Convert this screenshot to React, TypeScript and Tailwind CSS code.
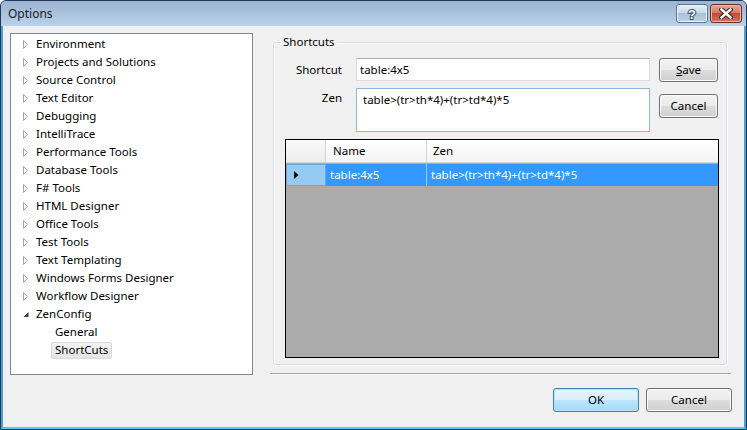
import React from "react"

const treeItems = [
	"Environment",
	"Projects and Solutions",
	"Source Control",
	"Text Editor",
	"Debugging",
	"IntelliTrace",
	"Performance Tools",
	"Database Tools",
	"F# Tools",
	"HTML Designer",
	"Office Tools",
	"Test Tools",
	"Text Templating",
	"Windows Forms Designer",
	"Workflow Designer",
]

function Collapsed() {
	return (
		<svg width="6" height="9" viewBox="0 0 6 9" className="shrink-0">
			<path d="M0.5 0.5 L4.5 4.5 L0.5 8.5 Z" fill="#ffffff" stroke="#a6a6a6" />
		</svg>
	)
}

function Expanded() {
	return (
		<svg width="6" height="9" viewBox="0 0 6 9" className="shrink-0">
			<path d="M5.5 2 L5.5 7 L0.5 7 Z" fill="#3b3b3b" />
		</svg>
	)
}

function WinButton({ children, focused, className }: { children: React.ReactNode; focused?: boolean; className?: string }) {
	return (
		<div
			className={
				(focused
					? "border-[#3c7fb1] bg-[linear-gradient(to_bottom,#e5f4fc_0%,#d8effb_50%,#bde6fd_50%,#a6d9f4_100%)] shadow-[inset_0_0_0_1px_#b9e4f7] "
					: "border-[#707070] bg-[linear-gradient(to_bottom,#f2f2f2_0%,#ebebeb_50%,#dddddd_50%,#cfcfcf_100%)] shadow-[inset_0_0_0_1px_#fafafa] ") +
				"border rounded-[3px] flex items-center justify-center text-black " +
				(className ?? "")
			}
		>
			{children}
		</div>
	)
}

export default function App() {
	return (
		<div className="w-[747px] h-[430px] flex flex-col rounded-t-[6px] border border-[#1f3a58] bg-[#b8cfe8] font-['Noto_Sans',sans-serif] text-[11.5px] text-black overflow-hidden">
			{/* title bar */}
			<div className="h-[25px] shrink-0 flex items-start justify-between bg-[linear-gradient(to_bottom,#9cb3d1,#bad1eb)] rounded-t-[5px]">
				<div className="pl-[7px] pt-[4px] text-[12px] text-[#1a1a1a]">Options</div>
				<div className="flex gap-[2px] pt-[3px] pr-[4px]">
					<div className="w-[32px] h-[19px] rounded-[3px] border border-[#5d7594] bg-[linear-gradient(to_bottom,#e8f0f8_0%,#c7d8ea_45%,#a9c1dc_50%,#bdd3ea_100%)] shadow-[inset_0_0_0_1px_#eef4fa] flex items-center justify-center">
						<svg width="14" height="14" viewBox="0 0 14 14">
							<text
								x="7"
								y="12"
								textAnchor="middle"
								fontSize="13"
								fontWeight="bold"
								fontFamily="Liberation Sans, sans-serif"
								fill="#ffffff"
								stroke="#3a4f68"
								strokeWidth="2"
								paintOrder="stroke"
							>
								?
							</text>
						</svg>
					</div>
					<div className="w-[32px] h-[19px] rounded-[3px] border border-[#6e2a24] bg-[linear-gradient(to_bottom,#e8a493_0%,#d77b68_45%,#c24a32_50%,#d2785f_100%)] shadow-[inset_0_0_0_1px_#eab7aa] flex items-center justify-center">
						<svg width="14" height="11" viewBox="0 0 14 11">
							<path d="M2.5 1.5 L11.5 9.5 M11.5 1.5 L2.5 9.5" stroke="#3b2420" strokeWidth="4.5" strokeLinecap="square" />
							<path d="M2.5 1.5 L11.5 9.5 M11.5 1.5 L2.5 9.5" stroke="#ffffff" strokeWidth="2.5" strokeLinecap="square" />
						</svg>
					</div>
				</div>
			</div>

			{/* frame + client */}
			<div className="flex-1 border-x-2 border-b-2 border-x-[#4d9dd1] border-b-[#58c6ec] bg-[#f0f0f0] flex flex-col">
				<div className="pt-[7px] pl-[7px] flex h-[349px]">
					{/* tree */}
					<div className="w-[243px] h-[342px] shrink-0 bg-white border border-[#828790] pt-[1px]">
						{treeItems.map((t) => (
							<div key={t} className="h-[18px] flex items-center pl-[12px] gap-[7px]">
								<Collapsed />
								<span>{t}</span>
							</div>
						))}
						<div className="h-[18px] flex items-center pl-[12px] gap-[7px]">
							<Expanded />
							<span>ZenConfig</span>
						</div>
						<div className="h-[18px] flex items-center pl-[44px]">General</div>
						<div className="h-[18px] flex items-center pl-[40px]">
							<span className="h-[17px] flex items-center px-[3px] border border-[#d9d9d9] rounded-[2px] bg-[linear-gradient(to_bottom,#f2f2f2,#e5e5e5)]">
								ShortCuts
							</span>
						</div>
					</div>

					{/* right page */}
					<div className="ml-[17px] flex-1 pt-[9px] flex flex-col">
						<div className="relative ml-[3px] w-[454px] h-[323px] border border-[#d5dfe5] rounded-[3px] shadow-[inset_1px_1px_0_#ffffff,1px_1px_0_#ffffff]">
							<div className="absolute -top-[9px] left-[7px] px-[2px] bg-[#f0f0f0] leading-[16px]">Shortcuts</div>
							<div className="pt-[15px] flex">
								<div className="w-[68px] flex flex-col items-end">
									<div className="h-[23px] flex items-center">Shortcut</div>
									<div className="mt-[7px] pt-[1px]">Zen</div>
								</div>
								<div className="ml-[14px] w-[294px] flex flex-col">
									<div className="h-[23px] bg-white border border-[#d9dde3] border-t-[#abadb3] flex items-center pl-[3px]">table:4x5</div>
									<div className="mt-[7px] h-[44px] bg-white border border-[#8fb6dc] pl-[6px] pt-[2px]">table&gt;(tr&gt;th*4)+(tr&gt;td*4)*5</div>
								</div>
								<div className="ml-[9px] flex flex-col">
									<WinButton className="w-[59px] h-[24px]">
										<span>
											<span className="underline">S</span>ave
										</span>
									</WinButton>
									<WinButton className="w-[59px] h-[24px] mt-[12px]">Cancel</WinButton>
								</div>
							</div>

							{/* grid */}
							<div className="ml-[11px] mt-[7px] w-[434px] h-[219px] border border-black bg-[#ababab] flex flex-col">
								<div className="h-[23px] flex bg-[linear-gradient(to_bottom,#ffffff,#f4f4f4)] border-b border-[#d5d5d5]">
									<div className="w-[40px] bg-[linear-gradient(to_bottom,#fafafa,#ececec)] border-r border-[#d5d5d5]" />
									<div className="w-[101px] pl-[7px] flex items-center border-r border-[#d5d5d5]">Name</div>
									<div className="flex-1 pl-[6px] flex items-center">Zen</div>
								</div>
								<div className="mt-[1px] h-[22px] flex text-white">
									<div className="w-[40px] bg-[#95cbf3] border border-[#6aa6d6] flex items-center pl-[7px]">
										<svg width="5" height="8" viewBox="0 0 5 8">
											<path d="M0 0 L4.5 4 L0 8 Z" fill="#000000" />
										</svg>
									</div>
									<div className="w-[101px] bg-[#3399ff] border-r border-[#9fc7ef] flex items-center pl-[4px]">table:4x5</div>
									<div className="flex-1 bg-[#3399ff] flex items-center pl-[4px]">table&gt;(tr&gt;th*4)+(tr&gt;td*4)*5</div>
								</div>
							</div>
						</div>
						<div className="mt-[8px] w-[461px] h-[2px] border-t border-[#a0a0a0] border-b border-b-white" />
					</div>
				</div>

				{/* dialog buttons */}
				<div className="mt-[13px] flex justify-end gap-[7px] pr-[12px]">
					<WinButton focused className="w-[86px] h-[24px]">OK</WinButton>
					<WinButton className="w-[86px] h-[24px]">Cancel</WinButton>
				</div>
			</div>
		</div>
	)
}
